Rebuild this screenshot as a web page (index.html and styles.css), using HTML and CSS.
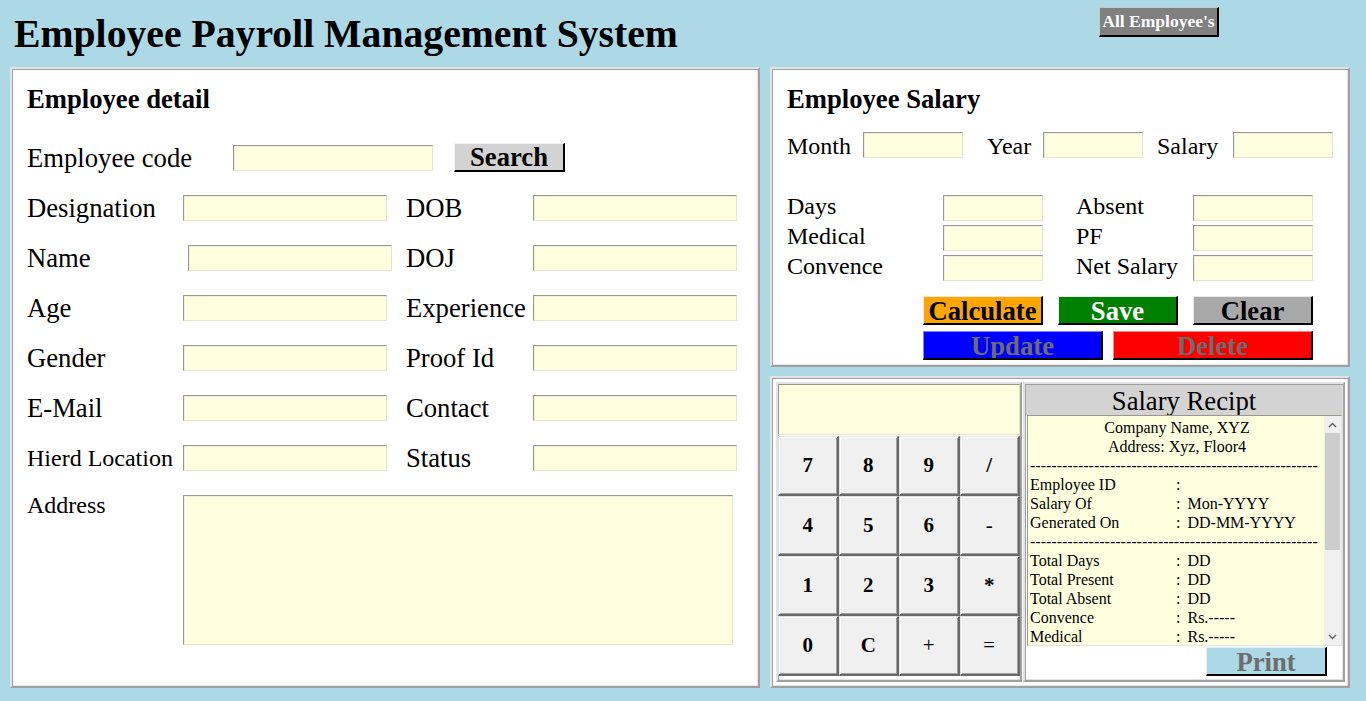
FILE: index.html
```html
<!DOCTYPE html>
<html lang="en">
<head>
<meta charset="utf-8">
<title>Employee Payroll Management System</title>
<link rel="stylesheet" href="styles.css">
</head>
<body>
<header class="topbar">
  <h1 class="title">Employee Payroll Management System</h1>
  <button class="btn-all">All Employee's</button>
</header>
<main class="main">
  <section class="panel panel-detail">
    <h2 class="panel-title">Employee detail</h2>
    <div class="code-row">
      <label class="lbl code-lbl">Employee code</label>
      <input class="field code-field" type="text">
      <button class="btn-search">Search</button>
    </div>
    <div class="detail-grid">
      <div class="drow">
        <label class="lbl l1">Designation</label>
        <div class="w1"><input class="field f204" type="text"></div>
        <label class="lbl l2">DOB</label>
        <input class="field f204" type="text">
      </div>
      <div class="drow">
        <label class="lbl l1">Name</label>
        <div class="w1"><input class="field f204 shifted" type="text"></div>
        <label class="lbl l2">DOJ</label>
        <input class="field f204" type="text">
      </div>
      <div class="drow">
        <label class="lbl l1">Age</label>
        <div class="w1"><input class="field f204" type="text"></div>
        <label class="lbl l2">Experience</label>
        <input class="field f204" type="text">
      </div>
      <div class="drow">
        <label class="lbl l1">Gender</label>
        <div class="w1"><input class="field f204" type="text"></div>
        <label class="lbl l2">Proof Id</label>
        <input class="field f204" type="text">
      </div>
      <div class="drow">
        <label class="lbl l1">E-Mail</label>
        <div class="w1"><input class="field f204" type="text"></div>
        <label class="lbl l2">Contact</label>
        <input class="field f204" type="text">
      </div>
      <div class="drow">
        <label class="lbl l1 small">Hierd Location</label>
        <div class="w1"><input class="field f204" type="text"></div>
        <label class="lbl l2">Status</label>
        <input class="field f204" type="text">
      </div>
      <div class="drow addr-row">
        <label class="lbl l1 small addr-lbl">Address</label>
        <textarea class="field addr"></textarea>
      </div>
    </div>
  </section>

  <div class="right-col">
    <section class="panel panel-salary">
      <h2 class="panel-title">Employee Salary</h2>
      <div class="srow1">
        <label class="slbl m-lbl">Month</label>
        <input class="field f100" type="text">
        <label class="slbl y-lbl">Year</label>
        <input class="field f100" type="text">
        <label class="slbl s-lbl">Salary</label>
        <input class="field f100" type="text">
      </div>
      <div class="sgrid">
        <div class="srow">
          <label class="slbl c1">Days</label>
          <input class="field f100" type="text">
          <label class="slbl c2">Absent</label>
          <input class="field f120" type="text">
        </div>
        <div class="srow">
          <label class="slbl c1">Medical</label>
          <input class="field f100" type="text">
          <label class="slbl c2">PF</label>
          <input class="field f120" type="text">
        </div>
        <div class="srow">
          <label class="slbl c1">Convence</label>
          <input class="field f100" type="text">
          <label class="slbl c2">Net Salary</label>
          <input class="field f120" type="text">
        </div>
      </div>
      <div class="brow brow1">
        <button class="sbtn b-calc">Calculate</button>
        <button class="sbtn b-save">Save</button>
        <button class="sbtn b-clear">Clear</button>
      </div>
      <div class="brow brow2">
        <button class="sbtn b-update">Update</button>
        <button class="sbtn b-delete">Delete</button>
      </div>
    </section>

    <section class="panel panel-bottom">
      <div class="calc">
        <div class="calc-display"></div>
        <div class="calc-grid">
          <button class="ck">7</button><button class="ck">8</button><button class="ck">9</button><button class="ck">/</button>
          <button class="ck">4</button><button class="ck">5</button><button class="ck">6</button><button class="ck thin">-</button>
          <button class="ck">1</button><button class="ck">2</button><button class="ck">3</button><button class="ck">*</button>
          <button class="ck">0</button><button class="ck">C</button><button class="ck thin">+</button><button class="ck thin">=</button>
        </div>
      </div>
      <div class="receipt">
        <div class="rhead">Salary Recipt</div>
        <div class="rbox">
          <div class="rtext">
            <div class="rc">Company Name, XYZ</div>
            <div class="rc">Address: Xyz, Floor4</div>
            <div class="rd">------------------------------------------------------</div>
            <div class="rl"><span class="rk">Employee ID</span>:</div>
            <div class="rl"><span class="rk">Salary Of</span>:<span class="rv">Mon-YYYY</span></div>
            <div class="rl"><span class="rk">Generated On</span>:<span class="rv">DD-MM-YYYY</span></div>
            <div class="rd">------------------------------------------------------</div>
            <div class="rl"><span class="rk">Total Days</span>:<span class="rv">DD</span></div>
            <div class="rl"><span class="rk">Total Present</span>:<span class="rv">DD</span></div>
            <div class="rl"><span class="rk">Total Absent</span>:<span class="rv">DD</span></div>
            <div class="rl"><span class="rk">Convence</span>:<span class="rv">Rs.-----</span></div>
            <div class="rl"><span class="rk">Medical</span>:<span class="rv">Rs.-----</span></div>
            <div class="rl"><span class="rk">PF</span>:<span class="rv">Rs.-----</span></div>
            <div class="rl"><span class="rk">Gross Salary</span>:<span class="rv">Rs.-----</span></div>
            <div class="rd">------------------------------------------------------</div>
            <div class="rl"><span class="rk">Net Salary</span>:<span class="rv">Rs.-----</span></div>
            <div class="rd">------------------------------------------------------</div>
          </div>
          <div class="sbar">
            <div class="sb-btn"><svg width="9" height="6" viewBox="0 0 9 6"><path d="M1 5 L4.5 1.5 L8 5" fill="none" stroke="#606060" stroke-width="1.4"/></svg></div>
            <div class="sb-thumb"></div>
            <div class="sb-fill"></div>
            <div class="sb-btn"><svg width="9" height="6" viewBox="0 0 9 6"><path d="M1 1 L4.5 4.5 L8 1" fill="none" stroke="#606060" stroke-width="1.4"/></svg></div>
          </div>
        </div>
        <div class="prow">
          <button class="btn-print">Print</button>
        </div>
      </div>
    </section>
  </div>
</main>
</body>
</html>
```

FILE: styles.css
```css
* { box-sizing: border-box; }

body {
  margin: 0;
  width: 1366px;
  height: 701px;
  overflow: hidden;
  background: #add8e6;
  font-family: "Liberation Serif", "Times New Roman", serif;
  color: #000;
}

button, input, textarea {
  font-family: "Liberation Serif", "Times New Roman", serif;
  padding: 0;
  margin: 0;
  outline: none;
}

/* ---------- top bar ---------- */
.topbar {
  display: flex;
  align-items: flex-start;
  height: 67px;
}
.title {
  margin: 11px 0 0 14px;
  font-size: 39.7px;
  line-height: 46px;
  font-weight: bold;
  white-space: nowrap;
}
.btn-all {
  margin: 7px 147px 0 auto;
  width: 120px;
  height: 30px;
  background: #808080;
  color: #fff;
  font-size: 17.5px;
  font-weight: bold;
  border-style: solid;
  border-width: 1px 2px 2px 1px;
  border-color: #c8c8c8 #000 #000 #c8c8c8;
}

/* ---------- layout ---------- */
.main {
  display: flex;
  gap: 10px;
  padding-left: 10px;
}
.panel {
  background: #fff;
  border: 2px solid;
  border-color: #e3e3e3 #a0a0a0 #a0a0a0 #e3e3e3;
  box-shadow: inset 1px 1px 0 #a0a0a0, inset -1px -1px 0 #e3e3e3;
}
.panel-title {
  margin: 0;
  font-size: 26.67px;
  line-height: 30px;
  font-weight: bold;
  white-space: nowrap;
}
.right-col {
  display: flex;
  flex-direction: column;
  gap: 9px;
}

/* ---------- fields ---------- */
.field {
  height: 26px;
  background: #ffffe0;
  border: 1px solid;
  border-color: #999990 #e6e6cc #e6e6cc #999990;
  box-shadow: inset 1px 1px 0 #f0f0e0;
}
.lbl {
  font-size: 26.67px;
  white-space: nowrap;
}
.lbl.small { font-size: 24px; }

/* ---------- employee detail ---------- */
.panel-detail {
  width: 750px;
  height: 621px;
  padding: 15px 0 0 15px;
}
.code-row {
  margin-top: 29px;
  height: 29px;
  display: flex;
  align-items: center;
}
.code-lbl { width: 206px; padding-top: 2px; }
.code-field { width: 200px; margin-right: 21px; }
.btn-search {
  width: 111px;
  height: 29px;
  background: #d3d3d3;
  font-size: 26.67px;
  font-weight: bold;
  line-height: 26px;
  border-style: solid;
  border-width: 1px 2px 2px 1px;
  border-color: #f4f4f4 #000 #000 #f4f4f4;
}
.detail-grid {
  margin-top: 23px;
  display: flex;
  flex-direction: column;
  gap: 24px;
}
.drow {
  display: flex;
  align-items: center;
  height: 26px;
}
.drow .lbl { padding-top: 1px; }
.l1 { width: 156px; }
.w1 { width: 223px; display: flex; }
.l2 { width: 127px; }
.f204 { width: 204px; }
.shifted { margin-left: 5px; }
.addr-row {
  align-items: flex-start;
  height: auto;
}
.drow .addr-lbl {
  line-height: 24px;
  margin-top: -2px;
  padding-top: 0;
}
.addr {
  width: 550px;
  height: 150px;
  resize: none;
}

/* ---------- employee salary ---------- */
.panel-salary {
  width: 580px;
  height: 300px;
  padding: 15px 0 0 15px;
}
.slbl {
  font-size: 24px;
  white-space: nowrap;
}
.srow1 {
  margin-top: 18px;
  height: 26px;
  display: flex;
  align-items: center;
}
.srow1 .slbl { padding-top: 2px; }
.f100 { width: 100px; }
.f120 { width: 120px; }
.m-lbl { width: 76px; }
.y-lbl { width: 56px; margin-left: 24px; }
.s-lbl { width: 76px; margin-left: 14px; }
.sgrid {
  margin-top: 37px;
  display: flex;
  flex-direction: column;
  gap: 4px;
}
.srow {
  display: flex;
  align-items: center;
  height: 26px;
}
.srow .slbl { line-height: 22px; margin-top: -4px; }
.c1 { width: 156px; }
.c2 { width: 117px; margin-left: 33px; }
.brow {
  display: flex;
  margin-left: 136px;
}
.brow1 { margin-top: 15px; gap: 15px; }
.brow2 { margin-top: 6px; gap: 10px; }
.sbtn {
  height: 29px;
  font-size: 26.67px;
  font-weight: bold;
  line-height: 28px;
  white-space: nowrap;
  overflow: hidden;
  border-style: solid;
  border-width: 1px 2px 2px 1px;
  border-color: #e8e8e8 #000 #000 #e8e8e8;
}
.b-calc { width: 120px; background: #ffa500; color: #000; }
.b-save { width: 120px; background: #008000; color: #fff; }
.b-clear { width: 120px; background: #a9a9a9; color: #000; }
.b-update { width: 180px; background: #0000ff; color: #6d6d6d; border-color: #8080ff #000 #000 #8080ff; }
.b-delete { width: 200px; background: #ff0000; color: #6d6d6d; border-color: #ff8080 #000 #000 #ff8080; }

/* ---------- bottom panel ---------- */
.panel-bottom {
  width: 580px;
  height: 312px;
  padding: 4px 3px 4px 4px;
  display: flex;
  gap: 1px;
}

.calc {
  width: 246px;
  height: 300px;
  border: 2px solid;
  border-color: #e3e3e3 #a0a0a0 #a0a0a0 #e3e3e3;
  box-shadow: inset 1px 1px 0 #a0a0a0, inset -1px -1px 0 #e3e3e3;
  background: #fff;
}
.calc-display {
  height: 51px;
  margin-bottom: 1px;
  background: #ffffe0;
  border: 1px solid;
  border-color: #999990 #e6e6cc #e6e6cc #999990;
}
.calc-grid {
  display: grid;
  grid-template-columns: repeat(4, 1fr);
  grid-template-rows: repeat(4, 60px);
}
.ck {
  background: #f0f0f0;
  font-size: 21px;
  font-weight: bold;
  color: #000;
  border-style: solid;
  border-width: 1px 2px 2px 1px;
  border-color: #e3e3e3 #696969 #696969 #e3e3e3;
  box-shadow: inset 1px 1px 0 #fff, inset -1px -1px 0 #a0a0a0;
}
.ck.thin { font-weight: normal; }

.receipt {
  width: 322px;
  height: 300px;
  border: 2px solid;
  border-color: #e3e3e3 #a0a0a0 #a0a0a0 #e3e3e3;
  box-shadow: inset 1px 1px 0 #a0a0a0, inset -1px -1px 0 #e3e3e3;
  padding: 1px;
  display: flex;
  flex-direction: column;
  background: #fff;
}
.rhead {
  height: 30px;
  flex: none;
  background: #d3d3d3;
  font-size: 26.67px;
  line-height: 32px;
  text-align: center;
  overflow: hidden;
  white-space: nowrap;
}
.rbox {
  height: 231px;
  flex: none;
  margin: 0 0 0 1px;
  display: flex;
  background: #ffffe0;
  border: 1px solid;
  border-color: #999990 #e3e3e3 #e3e3e3 #999990;
  overflow: hidden;
}
.rtext {
  flex: 1;
  overflow: hidden;
  padding: 2px 0 0 2px;
  font-size: 16px;
  line-height: 19px;
  white-space: nowrap;
}
.rc { text-align: center; }
.rd { overflow: hidden; }
.rk {
  display: inline-block;
  width: 146px;
}
.rv { margin-left: 7px; }

.sbar {
  width: 17px;
  flex: none;
  display: flex;
  flex-direction: column;
  align-items: center;
  background: #f0f0f0;
}
.sb-btn {
  height: 17px;
  width: 17px;
  display: flex;
  align-items: center;
  justify-content: center;
}
.sb-thumb {
  width: 15px;
  height: 117px;
  background: #cdcdcd;
}
.sb-fill { flex: 1; }

.prow {
  display: flex;
  justify-content: flex-end;
}
.btn-print {
  margin: 1px 15px 0 0;
  width: 121px;
  height: 29px;
  background: #add8e6;
  color: #6d6d6d;
  font-size: 26.67px;
  font-weight: bold;
  line-height: 28px;
  border-style: solid;
  border-width: 1px 2px 2px 1px;
  border-color: #e0f0f6 #000 #000 #e0f0f6;
}
```
